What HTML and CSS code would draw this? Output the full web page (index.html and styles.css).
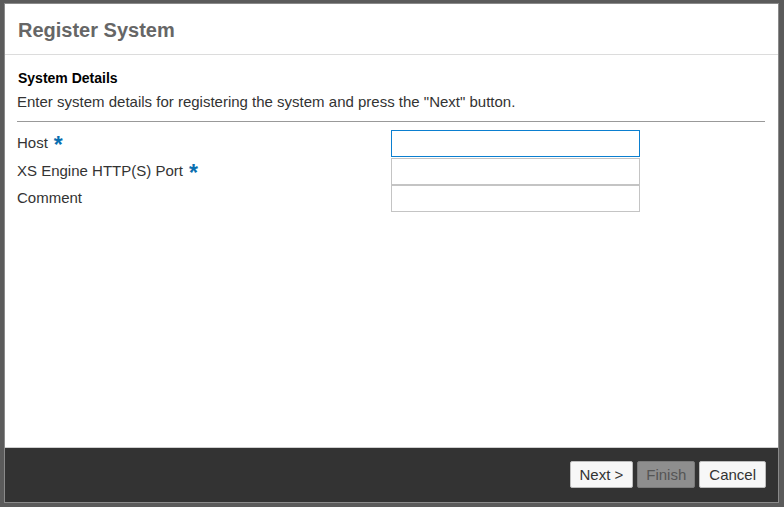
FILE: index.html
```html
<!DOCTYPE html>
<html>
<head>
<meta charset="utf-8">
<link rel="stylesheet" href="styles.css">
</head>
<body>
<div class="dialog">
  <div class="header"><h1 class="title">Register System</h1></div>
  <div class="content">
    <div class="section-title">System Details</div>
    <div class="section-desc">Enter system details for registering the system and press the "Next" button.</div>
    <div class="form">
      <label class="label">Host <span class="req">*</span></label>
      <input class="input input-focused" type="text">
      <label class="label">XS Engine HTTP(S) Port <span class="req">*</span></label>
      <input class="input input-last" type="text">
      <label class="label">Comment</label>
      <input class="input" type="text">
    </div>
  </div>
  <div class="footer">
    <button class="btn">Next &gt;</button>
    <button class="btn btn-disabled">Finish</button>
    <button class="btn">Cancel</button>
  </div>
</div>
</body>
</html>
```
FILE: styles.css
```css
html, body {
  margin: 0;
  height: 100%;
}
body {
  background: #5b5b5b;
  font-family: "Liberation Sans", Arial, sans-serif;
  padding: 4px 6px 5px 5px;
  box-sizing: border-box;
}
.dialog {
  height: 100%;
  background: #fff;
  display: flex;
  flex-direction: column;
  box-shadow: 0 0 0 1px #8a8a8a;
}
.header {
  height: 50px;
  border-bottom: 1px solid #dcdcdc;
  display: flex;
  align-items: center;
  padding-left: 13px;
}
.title {
  margin: 0;
  font-size: 20px;
  font-weight: bold;
  color: #666;
  padding-top: 3px;
}
.content {
  flex: 1;
  padding: 14px 13px 0 12px;
}
.section-title {
  font-size: 14px;
  font-weight: bold;
  color: #000;
  line-height: 18px;
  padding-left: 1px;
}
.section-desc {
  font-size: 15px;
  color: #333;
  line-height: 18px;
  margin-top: 6px;
  padding-bottom: 10px;
  border-bottom: 1px solid #999;
}
.form {
  display: grid;
  grid-template-columns: 374px 249px;
  margin-top: 8px;
}
.label {
  font-size: 15px;
  color: #333;
  height: 27px;
  display: flex;
  align-items: center;
  padding-bottom: 2px;
  box-sizing: border-box;
}
.req {
  color: #0a6fb0;
  font-weight: bold;
  font-size: 23px;
  margin-left: 6px;
  position: relative;
  top: 2px;
  line-height: 14px;
}
.input {
  height: 27px;
  box-sizing: border-box;
  border: 1px solid #c4c4c4;
  margin: 0 0 1px 0;
  padding: 0 4px;
  font: 15px "Liberation Sans", Arial, sans-serif;
  outline: none;
  background: #fff;
}
.input-last { margin-bottom: 0; }
.input.input-focused {
  border: 1px solid #0b7fd0;
}
.footer {
  height: 55px;
  background: #333;
  border-top: 1px solid #cfcfcf;
  display: flex;
  justify-content: flex-end;
  align-items: flex-start;
  gap: 4px;
  padding: 13px 12px 0 0;
  box-sizing: border-box;
}
.btn {
  height: 27px;
  padding: 0 9px;
  background: #f7f7f7;
  border: 1px solid #bdbdbd;
  border-radius: 2px;
  font: 15px "Liberation Sans", Arial, sans-serif;
  color: #333;
}
.btn-disabled {
  padding: 0 8px;
  background: #8e8e8e;
  border-color: #7a7a7a;
  color: #555;
}
```
